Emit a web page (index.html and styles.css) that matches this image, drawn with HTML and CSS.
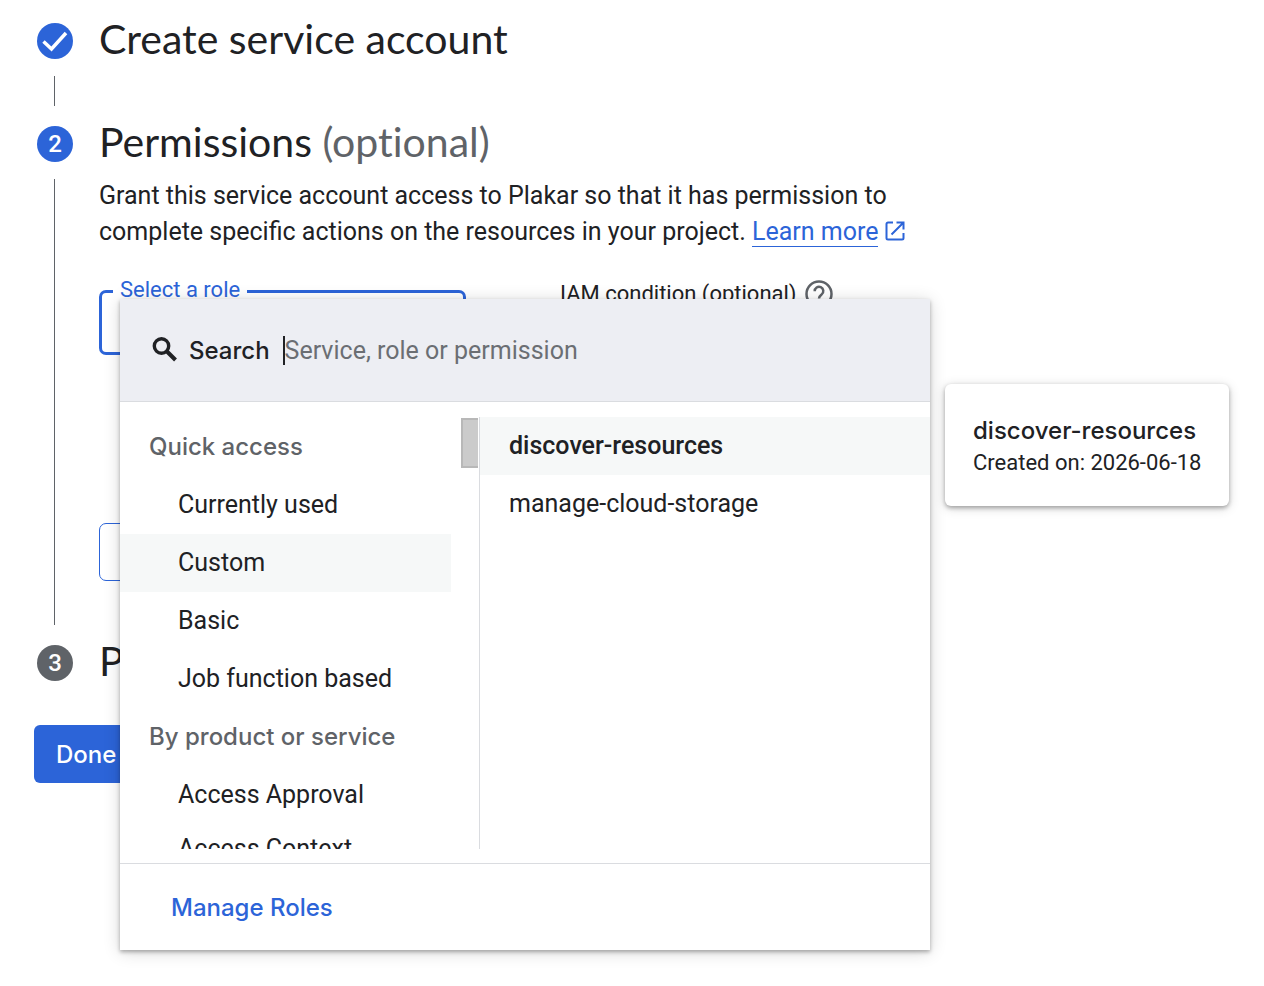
FILE: index.html
```html
<!DOCTYPE html>
<html lang="en">
<head>
  <meta charset="UTF-8">
  <meta name="viewport" content="width=device-width, initial-scale=1">
  <title>Create service account</title>
  <link rel="stylesheet" href="styles.css">
</head>
<body>

  <main class="stepper">
    <section class="step">
      <div class="rail">
        <span class="badge">
          <svg width="36" height="36" viewBox="0 0 36 36"><path d="M6.500 18.500l8 7.500L29 10" fill="none" stroke="#fff" stroke-width="3.500"/></svg>
        </span>
        <span class="line"></span>
      </div>
      <div class="content">
        <h2>Create service account</h2>
      </div>
    </section>

    <section class="step">
      <div class="rail">
        <span class="badge">2</span>
        <span class="line"></span>
      </div>
      <div class="content">
        <h2>Permissions <span class="optional">(optional)</span></h2>
        <p class="description">Grant this service account access to Plakar so that it has permission to complete specific actions on the resources in your project. <a href="#">Learn more</a>
          <svg class="external" width="20" height="20" viewBox="0 0 20 20"><path d="M8 1.500H3A1.500 1.500 0 0 0 1.500 3v14A1.500 1.500 0 0 0 3 18.500h14a1.500 1.500 0 0 0 1.500-1.500v-5M11.500 1.500h7v7M18 2L6.500 13.500" fill="none" stroke="currentColor" stroke-width="2"/></svg>
        </p>

        <div class="fields">
          <div class="role-field">
            <label for="role">Select a role</label>
            <select id="role"><option></option></select>

            <div class="panel">
              <div class="search">
                <svg width="26" height="26" viewBox="0 0 26 26"><circle cx="9.500" cy="9" r="7.200" fill="none" stroke="currentColor" stroke-width="3.400"/><path d="M14.500 14l9 9" stroke="currentColor" stroke-width="4"/></svg>
                <label for="search">Search</label>
                <input type="text" id="search" placeholder="Service, role or permission">
              </div>
              <div class="columns">
                <div class="categories">
                  <h3>Quick access</h3>
                  <button>Currently used</button>
                  <button class="active">Custom</button>
                  <button>Basic</button>
                  <button>Job function based</button>
                  <h3>By product or service</h3>
                  <button>Access Approval</button>
                  <button>Access Context Manager</button>
                  <span class="thumb"></span>
                </div>
                <div class="roles">
                  <button class="active">discover-resources</button>
                  <button>manage-cloud-storage</button>
                </div>
              </div>
              <div class="footer">
                <a href="#">Manage Roles</a>
              </div>

              <div class="tooltip" role="tooltip">
                <strong>discover-resources</strong>
                <span>Created on: 2026-06-18</span>
              </div>
            </div>
          </div>

          <div class="condition">
            <span>IAM condition (optional)</span>
            <svg width="28" height="28" viewBox="0 0 28 28"><circle cx="14" cy="14" r="12.500" fill="none" stroke="currentColor" stroke-width="2.500"/><path d="M9.700 11.200a4.300 4.300 0 1 1 7 3.200c-1.600 1.300-2.700 2-2.700 4" fill="none" stroke="currentColor" stroke-width="2.500"/><circle cx="14" cy="21.300" r="1.500" fill="currentColor"/></svg>
          </div>
        </div>

        <button class="add-role" aria-label="Add another role"></button>
      </div>
    </section>

    <section class="step">
      <div class="rail">
        <span class="badge inactive">3</span>
      </div>
      <div class="content">
        <h2>Principals</h2>
      </div>
    </section>

    <button class="done">Done</button>
  </main>

</body>
</html>
```
FILE: styles.css
```css
* {
  box-sizing: border-box;
}
body {
  margin: 0;
  background: #fff;
  color: #202124;
  font-family: Roboto, sans-serif;
  font-size: 25px;
}
button, input, select {
  font: inherit;
  color: inherit;
}
button {
  cursor: pointer;
}
a {
  color: #2c64d8;
}
.stepper {
  min-height: 100vh;
  padding: 16px 34px 0;
}

/* steps */
.step {
  display: flex;
  gap: 26px;
}
.rail {
  display: flex;
  flex-direction: column;
  align-items: center;
  flex: none;
  width: 36px;
  margin-left: 3px;
  padding-top: 7px;
}
.badge {
  display: flex;
  align-items: center;
  justify-content: center;
  width: 36px;
  height: 36px;
  border-radius: 50%;
  background: #2c64d8;
  color: #fff;
  font-size: 24px;
  font-weight: 500;
}
.badge.inactive {
  background: #5f6368;
}
.line {
  flex: 1;
  width: 1px;
  min-height: 30px;
  margin: 17px 1px 13px 0;
  background: #5f6368;
}
.content {
  flex: 1;
  min-width: 0;
}
h2 {
  margin: 0;
  font-family: Lato, sans-serif;
  font-size: 41px;
  font-weight: 400;
  line-height: 46px;
  font-variant-ligatures: none;
}
.optional {
  color: #5f6368;
}
.description {
  max-width: 816px;
  margin: 13px 0 40px;
  line-height: 36px;
}
.description a {
  text-decoration: none;
  border-bottom: 1px solid #2c64d8;
}
.external {
  color: #2c64d8;
  vertical-align: -1px;
}

/* role field */
.fields {
  display: flex;
  align-items: flex-start;
  gap: 94px;
}
.role-field {
  position: relative;
  width: 367px;
}
.role-field > label {
  position: absolute;
  top: -13px;
  left: 14px;
  padding: 0 7px;
  background: #fff;
  color: #2c64d8;
  font-size: 22px;
  line-height: 26px;
}
#role {
  display: block;
  width: 100%;
  height: 65px;
  border: 3px solid #2c64d8;
  border-radius: 7px;
  background: #fff;
  appearance: none;
}
.condition {
  display: flex;
  align-items: center;
  gap: 8px;
  margin-top: -11px;
  font-size: 22px;
  line-height: 30px;
}
.condition svg {
  color: #5f6368;
}
.add-role {
  display: block;
  width: 240px;
  height: 58px;
  margin: 168px 0 57px;
  border: 1px solid #2c64d8;
  border-radius: 7px;
  background: #fff;
}
.done {
  height: 58px;
  margin-top: 41px;
  padding: 0 22px;
  border: 0;
  border-radius: 6px;
  background: #2c64d8;
  color: #fff;
  font-family: Inter, sans-serif;
  font-size: 24px;
  font-weight: 500;
}

/* role picker */
.panel {
  position: absolute;
  z-index: 1;
  top: 9px;
  left: 21px;
  width: 810px;
  background: #fff;
  box-shadow: 0 2px 4px rgba(0, 0, 0, .3), 0 2px 16px rgba(0, 0, 0, .16);
}
.search {
  display: flex;
  align-items: center;
  height: 103px;
  padding: 0 32px;
  border-bottom: 1px solid #dadce0;
  background: #edeef3;
}
.search label {
  margin: 0 13px 0 11px;
  font-family: Inter, sans-serif;
  font-size: 24px;
  font-weight: 500;
}
.search input {
  flex: 1;
  height: 29px;
  padding: 0;
  border: 0;
  border-left: 2px solid #202124;
  outline: 0;
  background: none;
}
.search input::placeholder {
  color: #6b6e73;
  opacity: 1;
}
.columns {
  display: flex;
  height: 461px;
  padding: 15px 0 14px;
}
.categories {
  position: relative;
  width: 360px;
  padding: 1px 28px 0 0;
  border-right: 1px solid #dadce0;
  overflow: hidden;
}
.panel h3 {
  margin: 0;
  padding-left: 29px;
  color: #5f6368;
  font-family: Inter, sans-serif;
  font-size: 24px;
  font-weight: 500;
  line-height: 58px;
}
.columns button {
  display: flex;
  align-items: center;
  width: 100%;
  min-height: 58px;
  padding: 12px 29px;
  border: 0;
  background: none;
  line-height: 26px;
  text-align: left;
}
.categories button {
  padding-left: 58px;
}
.columns .active {
  background: #f6f8f8;
}
.thumb {
  position: absolute;
  top: 1px;
  right: 1px;
  width: 17px;
  height: 50px;
  border: 2px solid #b8b8b8;
  border-right: 0;
  background: #cbcbcb;
}
.roles {
  flex: 1;
}
.roles .active {
  font-weight: 500;
}
.footer {
  display: flex;
  align-items: center;
  height: 87px;
  padding: 0 51px;
  border-top: 1px solid #dadce0;
}
.footer a {
  font-family: Inter, sans-serif;
  font-size: 24px;
  font-weight: 500;
  text-decoration: none;
}

.tooltip {
  position: absolute;
  top: 85px;
  left: 825px;
  display: flex;
  flex-direction: column;
  justify-content: center;
  width: 284px;
  height: 122px;
  padding: 4px 28px 0;
  border-radius: 6px;
  background: #fff;
  box-shadow: 0 2px 4px rgba(0, 0, 0, .3), 0 2px 12px rgba(0, 0, 0, .16);
  font-size: 22px;
  line-height: 32px;
  white-space: nowrap;
}
.tooltip strong {
  font-family: Inter, sans-serif;
  font-size: 24px;
  font-weight: 500;
}
```
